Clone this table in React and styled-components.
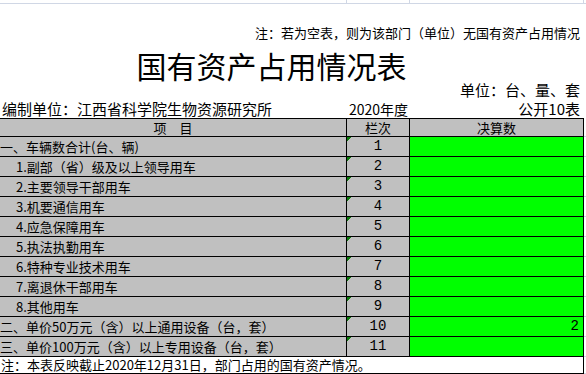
import React from "react";
import styled, { createGlobalStyle } from "styled-components";

const GlobalStyle = createGlobalStyle`
    body {
        margin: 0;
        background: #ffffff;
        font-family: "Noto Sans CJK SC", "Noto Sans", sans-serif;
        color: #000000;
    }
`;

const COLS = "347px 63px 174px 2px";
const GRID = "#d0d7e5";

const rows = [
    { label: "一、车辆数合计(台、辆)", no: "1" },
    { label: "1.副部（省）级及以上领导用车", no: "2", sub: true },
    { label: "2.主要领导干部用车", no: "3", sub: true },
    { label: "3.机要通信用车", no: "4", sub: true },
    { label: "4.应急保障用车", no: "5", sub: true },
    { label: "5.执法执勤用车", no: "6", sub: true },
    { label: "6.特种专业技术用车", no: "7", sub: true },
    { label: "7.离退休干部用车", no: "8", sub: true },
    { label: "8.其他用车", no: "9", sub: true },
    { label: "二、单价50万元（含）以上通用设备（台，套）", no: "10", value: "2" },
    { label: "三、单价100万元（含）以上专用设备（台，套）", no: "11" },
];

export default function App() {
    return (
        <Page>
            <GlobalStyle />
            <TopStrip>
                <StripCell />
                <StripCell />
                <StripCell />
                <div />
            </TopStrip>
            <Note>注：若为空表，则为该部门（单位）无国有资产占用情况</Note>
            <Title>国有资产占用情况表</Title>
            <Unit>单位：台、量、套</Unit>
            <InfoRow>
                <InfoText>编制单位：江西省科学院生物资源研究所</InfoText>
                <InfoText $small>2020年度</InfoText>
                <InfoText $right>公开10表</InfoText>
            </InfoRow>

            <Row $h={19}>
                <HeadCell>项　目</HeadCell>
                <HeadCell>栏次</HeadCell>
                <HeadCell>决算数</HeadCell>
                <Gutter />
            </Row>
            {rows.map((r) => (
                <Row key={r.no} $h={20}>
                    <LabelCell $sub={r.sub}>{r.label}</LabelCell>
                    <NoCell>{r.no}</NoCell>
                    <ValueCell>{r.value}</ValueCell>
                    <Gutter />
                </Row>
            ))}
            <Row $h={17}>
                <FootCell>注：本表反映截止2020年12月31日，部门占用的国有资产情况。</FootCell>
                <Gutter />
            </Row>
        </Page>
    );
}

const Page = styled.div`
    width: 586px;
    height: 374px;
    overflow: hidden;
    background: #ffffff;
`;

const TopStrip = styled.div`
    display: grid;
    grid-template-columns: ${COLS};
    height: 4px;
    border-bottom: 1px solid ${GRID};
    box-sizing: border-box;
`;

const StripCell = styled.div`
    border-right: 1px solid ${GRID};
`;

const Note = styled.div`
    box-sizing: border-box;
    height: 40px;
    padding: 18px 6px 0 0;
    font-size: 13px;
    line-height: 22px;
    text-align: right;
    white-space: nowrap;
`;

const Title = styled.div`
    box-sizing: border-box;
    height: 38px;
    padding: 4px 43px 0 0;
    font-size: 30px;
    line-height: 34px;
    text-align: center;
`;

const Unit = styled.div`
    height: 16px;
    padding-right: 6px;
    font-size: 15px;
    line-height: 15px;
    text-align: right;
`;

const InfoRow = styled.div`
    display: grid;
    grid-template-columns: 347px 63px 170px;
    height: 20px;
`;

const InfoText = styled.div`
    box-sizing: border-box;
    padding-top: 3px;
    padding-left: ${(p) => (p.$right ? 0 : 2)}px;
    font-size: ${(p) => (p.$small ? 14 : 15)}px;
    line-height: 16px;
    text-align: ${(p) => (p.$right ? "right" : "left")};
    white-space: nowrap;
`;

const Row = styled.div`
    display: grid;
    grid-template-columns: ${COLS};
    height: ${(p) => p.$h}px;
`;

const Cell = styled.div`
    box-sizing: border-box;
    display: flex;
    align-items: center;
    border-right: 1px solid #000000;
    border-bottom: 1px solid #000000;
    font-size: 13px;
    line-height: 15px;
    white-space: nowrap;
`;

const HeadCell = styled(Cell)`
    justify-content: center;
    border-top: 1px solid #000000;
    background: #c0c0c0;
`;

const LabelCell = styled(Cell)`
    padding-left: ${(p) => (p.$sub ? 16 : 0)}px;
    background: #c0c0c0;
`;

const NoCell = styled(Cell)`
    justify-content: center;
    font-family: "Liberation Mono", "Noto Sans CJK SC", monospace;
    font-size: 14px;
    background: linear-gradient(135deg, #0b7a0b 0 3.5px, transparent 3.5px), #c0c0c0;
`;

const ValueCell = styled(Cell)`
    justify-content: flex-end;
    padding-right: 4px;
    font-family: "Liberation Mono", "Noto Sans CJK SC", monospace;
    font-size: 14px;
    background: #00ff00;
`;

const FootCell = styled(Cell)`
    grid-column: 1 / 4;
    padding-left: 1px;
    line-height: 14px;
    background: #ffffff;
`;

const Gutter = styled.div`
    border-bottom: 1px solid ${GRID};
`;
